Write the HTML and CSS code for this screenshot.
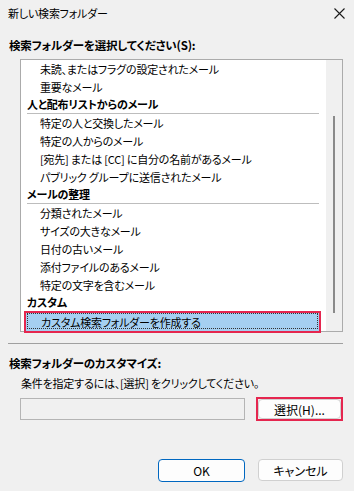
FILE: index.html
```html
<!DOCTYPE html>
<html lang="ja">
<head>
    <meta charset="UTF-8">
    <meta name="viewport" content="width=device-width, initial-scale=1.0">
    <title>新しい検索フォルダー</title>
    <!-- css -->
    <link rel="stylesheet" href="styles.css">
</head>
<body>
    <div class="dialog">
        <div class="titlebar">
            <span class="title">新しい検索フォルダー</span>
            <svg class="close" width="11" height="11" viewBox="0 0 11 11">
                <path d="M0.5 0.5 L10.5 10.5 M10.5 0.5 L0.5 10.5" stroke="#1a1a1a" stroke-width="1.1" fill="none"/>
            </svg>
        </div>

        <div class="label">検索フォルダーを選択してください(S):</div>

        <div class="listbox">
            <ul class="items">
                <li class="item">未読、またはフラグの設定されたメール</li>
                <li class="item">重要なメール</li>
                <li class="group">人と配布リストからのメール</li>
                <li class="item">特定の人と交換したメール</li>
                <li class="item">特定の人からのメール</li>
                <li class="item">[宛先] または [CC] に自分の名前があるメール</li>
                <li class="item">パブリック グループに送信されたメール</li>
                <li class="group">メールの整理</li>
                <li class="item">分類されたメール</li>
                <li class="item">サイズの大きなメール</li>
                <li class="item">日付の古いメール</li>
                <li class="item">添付ファイルのあるメール</li>
                <li class="item">特定の文字を含むメール</li>
                <li class="group">カスタム</li>
                <li class="item selected"><span>カスタム検索フォルダーを作成する</span></li>
            </ul>
            <div class="scrollbar"><div class="thumb"></div></div>
        </div>

        <hr class="sep">

        <div class="label">検索フォルダーのカスタマイズ:</div>
        <div class="hint">条件を指定するには、[選択] をクリックしてください。</div>
        <div class="criteria">
            <div class="field"></div>
            <div class="mark"><button class="btn">選択(H)...</button></div>
        </div>

        <div class="footer">
            <button class="btn primary">OK</button>
            <button class="btn">キャンセル</button>
        </div>
    </div>
</body>
</html>
```

FILE: styles.css
```css
html, body {
    margin: 0;
    padding: 0;
    background: #f0f0f0;
}
body {
    font-family: "Noto Sans CJK JP", "Noto Sans", sans-serif;
    font-size: 11px;
    letter-spacing: -0.2px;
    font-feature-settings: "palt";
    color: #000;
}
.dialog {
    width: 354px;
    height: 491px;
    box-sizing: border-box;
    padding: 0 11px 0 8px;
}
.titlebar {
    display: flex;
    justify-content: space-between;
    align-items: center;
    height: 26px;
}
.close {
    margin-right: -2px;
}
.label {
    font-weight: bold;
    font-size: 11.5px;
    line-height: 16px;
    margin: 11px 0 0 1px;
}
/* 一覧 */
.listbox {
    display: flex;
    margin: 6px 0 0 12px;
    height: 273px;
    box-sizing: border-box;
    border: 1px solid #ababab;
    background: #fff;
}
.items {
    flex: 1;
    list-style: none;
    margin: 0;
    padding: 0;
}
.items li {
    height: 18px;
    line-height: 18px;
    white-space: nowrap;
}
.item {
    padding-left: 19px;
}
.group {
    font-weight: bold;
    margin: 0 7px 0 6px;
    box-sizing: border-box;
    line-height: 16px !important;
    border-bottom: 1px solid #bdbdbd;
}
.selected {
    margin: 0 7px 0 5px;
    padding-left: 0 !important;
    background: #a5cff1;
    outline: 2px solid #e5264f;
}
.selected span {
    display: block;
    height: 16px;
    line-height: 16px;
    margin: 1px 1px;
    padding-left: 13px;
    border: 1px dotted #333;
    box-sizing: border-box;
}
.scrollbar {
    width: 16px;
    background: #f0f0f0;
    display: flex;
    justify-content: center;
    padding: 56px 0 18px;
    box-sizing: border-box;
}
.thumb {
    width: 2px;
    background: #8a8a8a;
}
.sep {
    margin: 11px 0 0 0;
    border: 0;
    height: 1px;
    background: #a0a0a0;
}
.hint {
    margin: 4px 0 0 13px;
    line-height: 16px;
}
.criteria {
    display: flex;
    align-items: center;
    margin: 6px 0 0 12px;
    gap: 11px;
}
.field {
    width: 225px;
    height: 22px;
    box-sizing: border-box;
    border: 1px solid #b4b4b4;
    background: #f0f0f0;
}
.mark {
    display: flex;
    border: 2px solid #e5264f;
}
.btn {
    font-family: inherit;
    font-size: 12px;
    font-feature-settings: "palt";
    width: 85px;
    height: 22px;
    padding: 0;
    background: #fdfdfd;
    border: 1px solid #d0d0d0;
    border-radius: 4px;
    color: #000;
}
.mark .btn {
    width: 83px;
    height: 20px;
}
.footer {
    display: flex;
    justify-content: flex-end;
    gap: 13px;
    margin-top: 38px;
}
.primary {
    width: 87px;
    height: 23px;
    border-color: #0067c0;
}
```
